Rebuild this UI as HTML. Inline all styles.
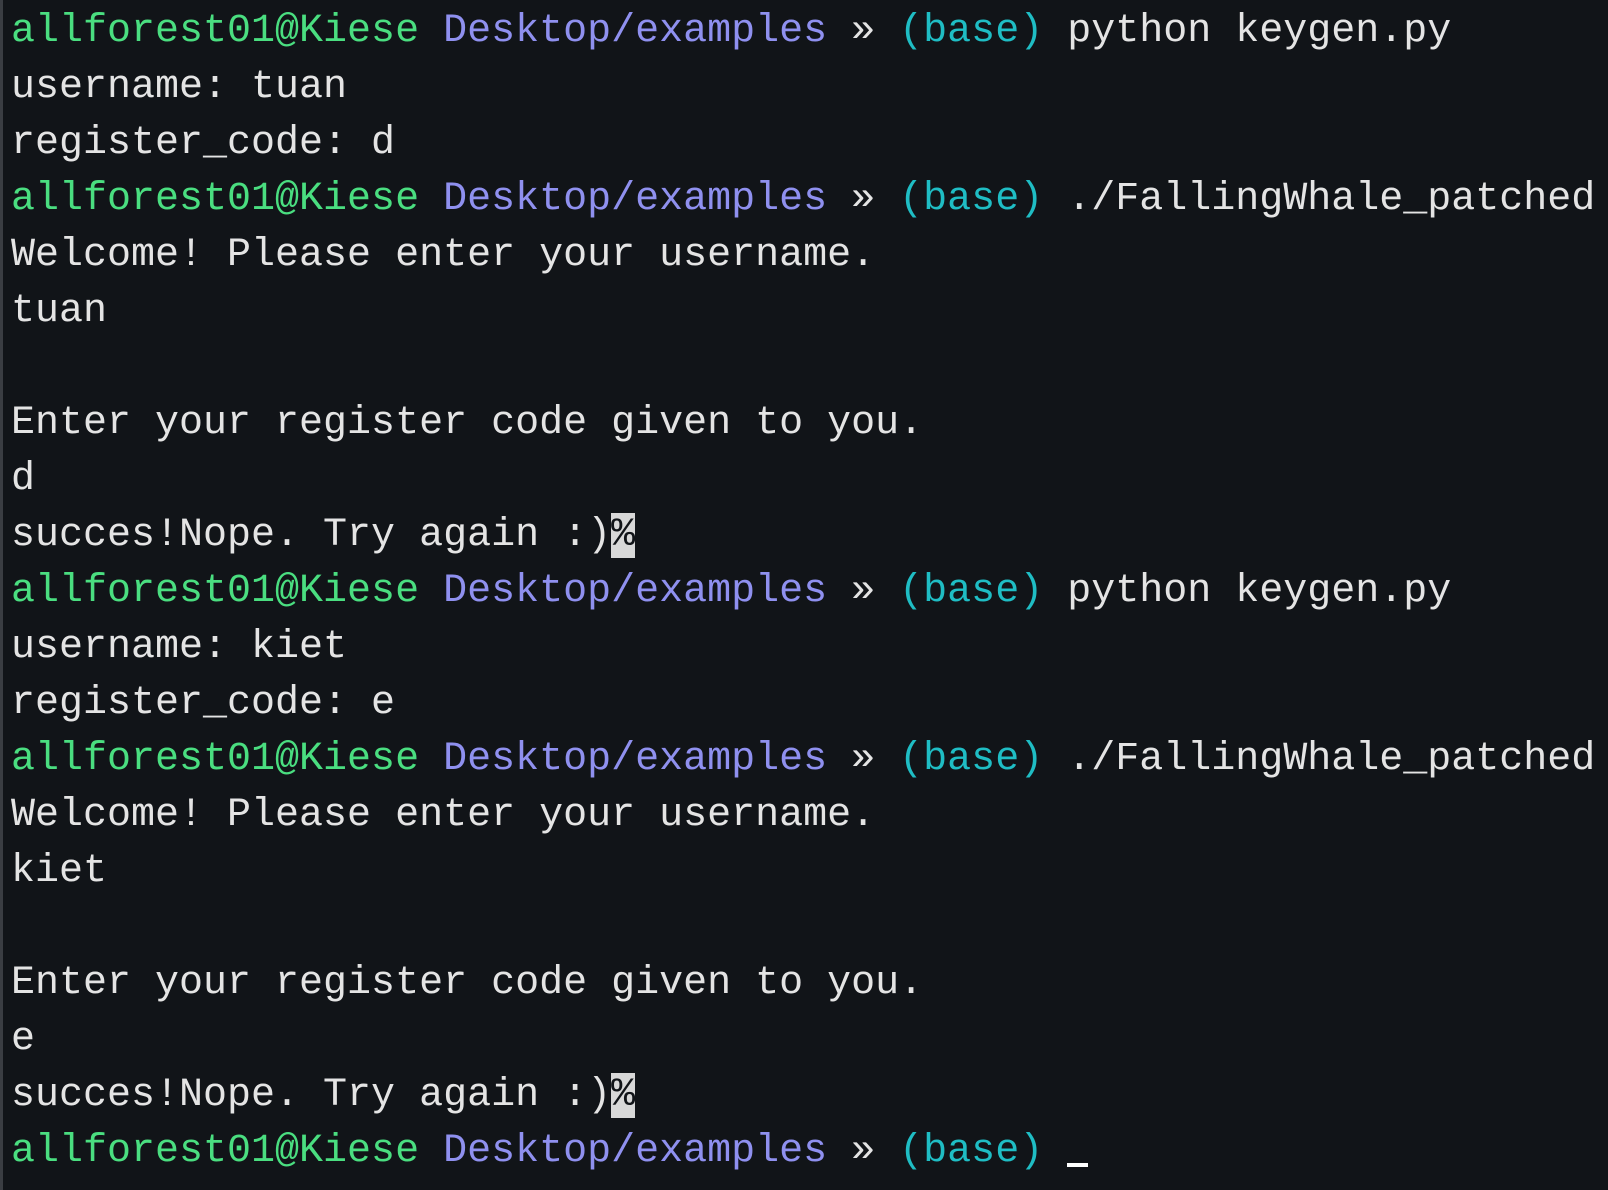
<!DOCTYPE html>
<html><head><meta charset="utf-8"><style>
html,body{margin:0;padding:0;background:#111418;width:1608px;height:1190px;overflow:hidden}
body{border-left:3px solid #3a3d42;box-sizing:border-box}
pre{margin:0;padding:4px 0 0 8px;font-family:"Liberation Mono",monospace;font-size:40px;line-height:56px;color:#e4e4e4;white-space:pre}
.g{color:#4ade80}.p{color:#8f90ef}.c{color:#1fbdc4}
.h{background:#d8d8d8;color:#111418}
.cur{display:inline-block;width:21px;height:4px;background:#fff;vertical-align:-6px}
</style></head><body><pre><span class="g">allforest01@Kiese</span> <span class="p">Desktop/examples</span> » <span class="c">(base)</span> python keygen.py
username: tuan
register_code: d
<span class="g">allforest01@Kiese</span> <span class="p">Desktop/examples</span> » <span class="c">(base)</span> ./FallingWhale_patched
Welcome! Please enter your username.
tuan

Enter your register code given to you.
d
succes!Nope. Try again :)<span class="h">%</span>
<span class="g">allforest01@Kiese</span> <span class="p">Desktop/examples</span> » <span class="c">(base)</span> python keygen.py
username: kiet
register_code: e
<span class="g">allforest01@Kiese</span> <span class="p">Desktop/examples</span> » <span class="c">(base)</span> ./FallingWhale_patched
Welcome! Please enter your username.
kiet

Enter your register code given to you.
e
succes!Nope. Try again :)<span class="h">%</span>
<span class="g">allforest01@Kiese</span> <span class="p">Desktop/examples</span> » <span class="c">(base)</span> <span class="cur"></span></pre></body></html>
